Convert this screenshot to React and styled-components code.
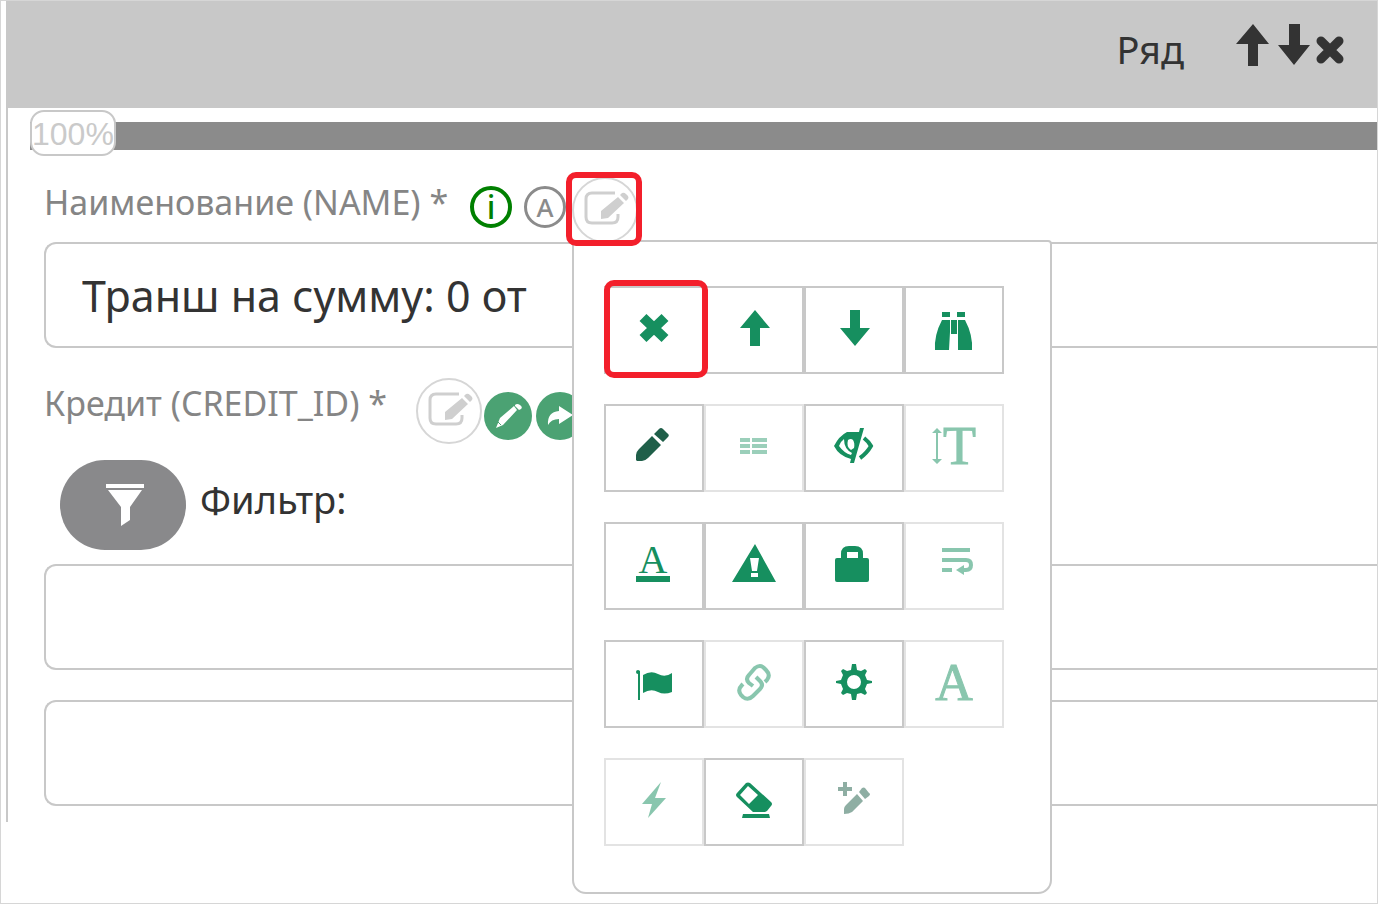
import React from "react";
import styled, { createGlobalStyle, css } from "styled-components";

const GlobalStyle = createGlobalStyle`
  *, *::before, *::after { box-sizing: border-box; }
  body {
    margin: 0;
    background: #fff;
    color: #333;
    font-family: "Noto Sans", "Open Sans", sans-serif;
  }
  button, input { font-family: inherit; color: inherit; }
`;

const GREEN = "#168f5f";
const LINE = "#c8c8c8";

const Page = styled.main`
  min-height: 100vh;
  border: 1px solid #d6d6d6;
  padding-left: 5px;
  overflow: hidden;
`;

const Panel = styled.section`
  border-left: 2px solid ${LINE};
  padding-bottom: 16px;
`;

const Header = styled.header`
  display: flex;
  align-items: center;
  justify-content: flex-end;
  gap: 52px;
  height: 107px;
  padding: 0 31px 20px 0;
  background: ${LINE};
`;

const Title = styled.h1`
  margin: 0;
  padding-top: 8px;
  font-size: 38px;
  line-height: 48px;
  font-weight: 400;
`;

const HeaderActions = styled.div`
  display: flex;
  gap: 6px;
`;

const PlainButton = styled.button`
  display: block;
  padding: 0;
  border: 0;
  background: none;
  line-height: 0;
  cursor: pointer;
`;

const Slider = styled.div`
  position: relative;
  margin: 14px 0 0 22px;
`;

const Range = styled.input`
  appearance: none;
  display: block;
  width: 100%;
  height: 28px;
  margin: 0;
  background: #8b8b8b;
  &::-webkit-slider-thumb {
    appearance: none;
    width: 86px;
    height: 46px;
    margin-bottom: 6px;
    border: 2px solid ${LINE};
    border-radius: 14px;
    background: #fff;
  }
`;

const Percent = styled.output`
  position: absolute;
  left: 2px;
  top: -12px;
  color: #cacaca;
  font-family: "Liberation Sans", Arial, sans-serif;
  font-size: 32px;
  line-height: 48px;
  pointer-events: none;
`;

const Form = styled.form`
  display: flex;
  flex-direction: column;
  padding: 28px 0 0 36px;
`;

const LabelRow = styled.div`
  display: flex;
  align-items: center;
  height: ${(p) => p.$height}px;
`;

const Label = styled.label`
  margin-right: ${(p) => p.$gap}px;
  padding-bottom: 16px;
  color: #858585;
  font-size: 34px;
  line-height: 44px;
  white-space: nowrap;
`;

const Badge = styled.button`
  display: flex;
  align-items: center;
  justify-content: center;
  flex: none;
  width: 42px;
  height: 42px;
  padding: 0;
  border: ${(p) => p.$border}px solid currentColor;
  border-radius: 50%;
  background: #fff;
  color: ${(p) => p.$color};
  font-size: ${(p) => p.$size}px;
  line-height: 34px;
  font-weight: 500;
`;

const Badges = styled.div`
  display: flex;
  gap: 12px;
  margin-right: 6px;
  padding-bottom: 6px;
`;

const frame = css`
  content: "";
  position: absolute;
  inset: ${(p) => p.$frame};
  z-index: 3;
  border: 6px solid #f31f2b;
  border-radius: 10px;
  pointer-events: none;
`;

const EditAnchor = styled.div`
  position: relative;
  flex: none;
  width: 66px;
  height: 66px;
  ${(p) => p.$frame && css`&::after { ${frame} }`}
`;

const EditButton = styled(PlainButton)`
  width: 66px;
  height: 66px;
  border: 2px solid #d6d6d6;
  border-radius: 50%;
  color: #cfcfcf;
  svg { margin: -2px; }
`;

const RoundActions = styled.div`
  display: flex;
  gap: 4px;
  padding: 10px 0 0 2px;
`;

const RoundButton = styled(PlainButton)`
  width: 48px;
  height: 48px;
  border-radius: 50%;
  background: #4ba273;
`;

const Field = styled.input`
  width: 100%;
  height: 106px;
  margin-bottom: ${(p) => p.$after || 0}px;
  padding: 0 36px;
  border: 2px solid ${LINE};
  border-right: 0;
  border-radius: 12px 0 0 12px;
  background: #fff;
  font-size: 43px;
  outline: 0;
`;

const FilterRow = styled.div`
  display: flex;
  gap: 14px;
  margin: 8px 0 14px 16px;
  font-size: 38px;
  line-height: 78px;
`;

const FilterButton = styled(PlainButton)`
  width: 126px;
  height: 90px;
  padding-left: 4px;
  border-radius: 45px;
  background: #89898b;
  svg { display: block; margin: 0 auto; }
`;

const Menu = styled.div`
  position: absolute;
  left: 0;
  top: 63px;
  z-index: 2;
  display: flex;
  flex-direction: column;
  gap: 30px;
  width: 480px;
  padding: 44px 30px 46px;
  border: 2px solid ${LINE};
  border-radius: 0 4px 14px 14px;
  background: #fff;
`;

const ToolRow = styled.div`
  display: flex;
`;

const Tool = styled.button`
  position: relative;
  display: flex;
  align-items: center;
  justify-content: center;
  width: 100px;
  height: 88px;
  padding: 0;
  border: 2px solid ${LINE};
  background: #fff;
  color: ${(p) => p.$color || GREEN};
  &:disabled { opacity: 0.5; }
  ${(p) => p.$frame && css`&::after { ${frame} }`}
`;

const ToolIcon = styled.svg`
  display: block;
  overflow: visible;
`;

const glyphFont = '"Liberation Serif", serif';

const ICONS = {
  cross: <path d="m11 9.5 22 21m0-21-22 21" stroke="currentColor" strokeWidth="10" />,
  up: <path d="M23 2 38 20H28V38H18V20H8Z" />,
  down: <path d="M18 2H28V20H38L23 38 8 20H18Z" />,
  binoculars: (
    <>
      <path d="M10 4h8v5h-8zM25 4h8v5h-8zM19 12h6v14h-6z" />
      <path d="M10 12h8v12l-1 18H3q-1-15 7-30ZM26 12h7q8 15 7 30H26Z" />
    </>
  ),
  pencil: (
    <path d="m20 10 9 9-13 13q-3 3-6 3H5l-1-1v-5q0-3 3-6ZM22 8l5-5q2-2 4 0l4 4q3 2 1 4l-5 5Z" />
  ),
  columns: (
    <path
      d="M8 12h10v4H8zM20 12h15v4H20zM8 18h10v4H8zM20 18h15v4H20zM8 24h10v4H8zM20 24h15v4H20z"
      opacity="0.85"
    />
  ),
  eye: (
    <>
      <path
        fillRule="evenodd"
        d="M28 2h4L22 37h-4l1-4Q7 30 2 20 7 10 15 6h12ZM12 13q-4 3-5 7 5 7 12 9l1-2q-8-4-8-14Zm4 1q-2 7 3 10l3-2q1-5-1-8-2-2-5 0Z"
      />
      <path d="M32 12q5 4 7 8-4 7-11 12" fill="none" stroke="currentColor" strokeWidth="4" />
    </>
  ),
  textHeight: (
    <>
      <path d="m5 2 5 5H6v26h4l-5 5-5-5h4V7H0Z" />
      <text x="11" y="38" fontFamily={glyphFont} fontSize="54" stroke="currentColor">T</text>
    </>
  ),
  underline: (
    <>
      <text x="21" y="29" textAnchor="middle" fontFamily={glyphFont} fontSize="40">A</text>
      <path d="M4 32h34v6H4z" />
    </>
  ),
  warning: <path fillRule="evenodd" d="M23 0 44 38H0ZM18 14l2 13h5l2-13ZM19 29v4h7v-4Z" />,
  lock: (
    <path
      fillRule="evenodd"
      d="M9 14V10q0-8 8-8h6q8 0 8 8v4h4q2 0 2 2v20q0 2-2 2H5q-2 0-2-2V16q0-2 2-2Zm6 0h11V8H15Z"
    />
  ),
  wrap: (
    <>
      <path d="M10 6h28M10 16h24q5 0 5 5t-5 5h-4M10 26h10" fill="none" stroke="currentColor" strokeWidth="4" />
      <path d="m24 26 8-5v10Z" />
    </>
  ),
  flag: (
    <>
      <path d="M7 9v29" stroke="currentColor" strokeWidth="2" />
      <circle cx="6" cy="10" r="2" />
      <path d="M11 13q8-5 15-1 7 4 14-1v19q-8 3-14 0-7-4-15 1Z" />
    </>
  ),
  link: (
    <path
      d="m21 24-4-3q-4-4 0-8l6-7q5-4 9 0l2 2q5 5 1 10l-2 2M24 15l4 4q4 4 0 8l-7 7q-5 5-10 1l-2-2q-4-5 1-10l1-1"
      fill="none"
      stroke="currentColor"
      strokeWidth="4"
    />
  ),
  gear: (
    <path
      fillRule="evenodd"
      d="m20 2h4l1 6 4 1 4-2 2 2-2 4 2 5 5 1v2l-5 1-2 5 2 4-2 2-4-2-4 1-1 6h-4l-1-6-4-1-4 2-2-2 2-4-2-5-5-1v-2l5-1 2-5-2-4 2-2 4 2 4-1ZM22 13a7 7 0 1 0 0 14 7 7 0 1 0 0-14Z"
    />
  ),
  letter: <text x="22" y="38" textAnchor="middle" fontFamily={glyphFont} fontSize="52" stroke="currentColor">A</text>,
  bolt: <path d="M29 2 23 18H34L16 38 20 24H10Z" />,
  eraser: (
    <>
      <path d="M14 3q2-1 4 0l21 19q2 2 0 4l-4 5-2 1H21L5 17q-2-2 0-4Zm2 3-8 9 9 9 9-9Z" fillRule="evenodd" />
      <path d="M11 34h26l1 4H10z" />
    </>
  ),
  addPencil: (
    <>
      <path d="M11 2h4v5h5v4h-5v5h-4v-5H6V7h5Z" />
      <path d="m25 14 6 7-11 11q-3 2-8 2v-5q0-2 2-4ZM27 12l3-4q2-1 3 0l4 5q2 1 0 3l-4 3Z" />
    </>
  ),
};

function Icon({ name }) {
  return (
    <ToolIcon width="44" height="44" viewBox="0 0 44 44" fill="currentColor" aria-hidden="true">
      {ICONS[name]}
    </ToolIcon>
  );
}

const TOOLS = [
  [
    { icon: "cross", label: "Удалить", frame: "-8px -6px -6px -2px" },
    { icon: "up", label: "Вверх" },
    { icon: "down", label: "Вниз" },
    { icon: "binoculars", label: "Найти" },
  ],
  [
    { icon: "pencil", label: "Изменить", color: "#1f5f49" },
    { icon: "columns", label: "Колонки", disabled: true },
    { icon: "eye", label: "Скрыть" },
    { icon: "textHeight", label: "Высота текста", disabled: true },
  ],
  [
    { icon: "underline", label: "Подчеркнуть" },
    { icon: "warning", label: "Предупреждение" },
    { icon: "lock", label: "Блокировка" },
    { icon: "wrap", label: "Перенос", disabled: true },
  ],
  [
    { icon: "flag", label: "Флаг" },
    { icon: "link", label: "Ссылка", disabled: true },
    { icon: "gear", label: "Настройки" },
    { icon: "letter", label: "Шрифт", disabled: true },
  ],
  [
    { icon: "bolt", label: "Действие", disabled: true },
    { icon: "eraser", label: "Очистить" },
    { icon: "addPencil", label: "Добавить", color: "#1f5f49", disabled: true },
  ],
];

function ToolMenu() {
  return (
    <Menu>
      {TOOLS.map((row, i) => (
        <ToolRow key={i}>
          {row.map((t) => (
            <Tool
              key={t.icon}
              type="button"
              aria-label={t.label}
              disabled={t.disabled}
              $color={t.color}
              $frame={t.frame}
            >
              <Icon name={t.icon} />
            </Tool>
          ))}
        </ToolRow>
      ))}
    </Menu>
  );
}

function Edit() {
  return (
    <EditButton type="button" aria-label="Редактировать">
      <svg width="66" height="66" viewBox="0 0 66 66" fill="currentColor">
        <path
          d="M43 16H20q-6 0-6 6v18q0 6 6 6h20q6 0 6-6v-3"
          fill="none"
          stroke="currentColor"
          strokeWidth="3"
        />
        <path d="m29 34 17-14 6 6-16 15-7 1ZM48 18l2-2q2-1 4 1l2 2q1 2 0 3l-2 2Z" />
      </svg>
    </EditButton>
  );
}

export default function App() {
  return (
    <>
      <GlobalStyle />
      <Page>
        <Panel>
          <Header>
            <Title>Ряд</Title>
            <HeaderActions>
              <PlainButton type="button" aria-label="Ряд вверх">
                <svg width="34" height="42" viewBox="0 0 34 42" fill="#333">
                  <path d="M17 0 33 20H22V42H12V20H0Z" />
                </svg>
              </PlainButton>
              <PlainButton type="button" aria-label="Ряд вниз">
                <svg width="34" height="42" viewBox="0 0 34 42" fill="#333">
                  <path d="M13 0H24V21H34L18 41 2 21H13Z" />
                </svg>
              </PlainButton>
              <PlainButton type="button" aria-label="Удалить ряд">
                <svg width="30" height="42" viewBox="0 0 30 42">
                  <path d="m5 17 18 18m0-18L5 35" stroke="#333" strokeWidth="9" strokeLinecap="round" />
                </svg>
              </PlainButton>
            </HeaderActions>
          </Header>
          <Slider>
            <Range id="width" type="range" min="0" max="100" defaultValue="0" aria-label="Ширина" />
            <Percent htmlFor="width">100%</Percent>
          </Slider>
          <Form>
            <LabelRow $height={64}>
              <Label htmlFor="name" $gap={22}>Наименование (NAME) *</Label>
              <Badges>
                <Badge type="button" $color="#008000" $border={4} $size={32}>i</Badge>
                <Badge type="button" $color="#8b8b8b" $border={3} $size={26}>A</Badge>
              </Badges>
              <EditAnchor $frame="-5px -4px -3px -6px">
                <Edit />
                <ToolMenu />
              </EditAnchor>
            </LabelRow>
            <Field id="name" type="text" defaultValue="Транш на сумму: 0 от" $after={22} />
            <LabelRow $height={82}>
              <Label htmlFor="credit" $gap={29}>Кредит (CREDIT_ID) *</Label>
              <EditAnchor>
                <Edit />
              </EditAnchor>
              <RoundActions>
                <RoundButton type="button" aria-label="Изменить кредит">
                  <svg width="48" height="48" viewBox="0 0 48 48" fill="#fff">
                    <path d="m16 26 14-12 3 4-14 15-7 3ZM31 13q2-2 5 0 3 2 1 4l-2 1-4-4Z" />
                    <path d="m14 30 3 3" stroke="#4ba273" />
                  </svg>
                </RoundButton>
                <RoundButton type="button" aria-label="Перейти">
                  <svg width="48" height="48" viewBox="0 0 48 48" fill="#fff">
                    <path d="M23 14 37 23 23 32V27Q15 27 12 33 11 20 23 19Z" />
                  </svg>
                </RoundButton>
              </RoundActions>
            </LabelRow>
            <FilterRow>
              <FilterButton type="button" aria-label="Фильтр">
                <svg width="40" height="44" viewBox="0 0 40 44" fill="#fff">
                  <path d="M1 1h38v4H1zM3 7h34L25 24v13l-9 6V24Z" />
                </svg>
              </FilterButton>
              <span>Фильтр:</span>
            </FilterRow>
            <Field id="credit" type="text" $after={30} />
            <Field type="text" aria-label="Значение" />
          </Form>
        </Panel>
      </Page>
    </>
  );
}
